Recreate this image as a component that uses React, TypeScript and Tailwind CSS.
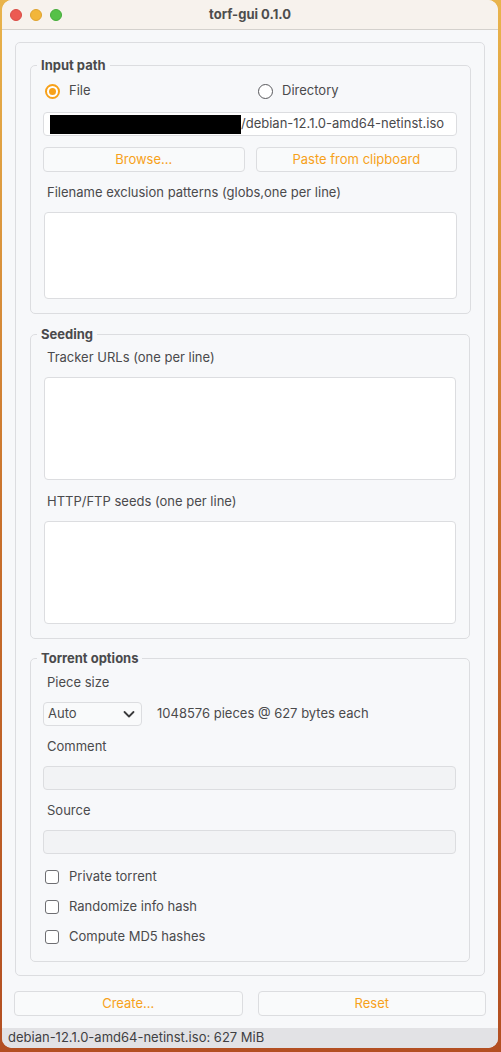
import React from "react";

const font = { fontFamily: "Inter, 'Noto Sans', sans-serif" };

function Label({ children, className = "" }: { children: React.ReactNode; className?: string }) {
  return <div className={`h-[16px] leading-[16px] pl-[4px] text-[13px] text-[#4a4a4c] ${className}`}>{children}</div>;
}

function Group({ title, children, className = "" }: { title: string; children: React.ReactNode; className?: string }) {
  return (
    <fieldset className={`border border-[#dcdde0] rounded-[5px] pl-[12px] pr-[13px] pb-[14px] ${className}`}>
      <legend className="ml-[-6px] px-[4px] h-[16px] leading-[16px] text-[13px] font-bold text-[#4a4a4c]">{title}</legend>
      {children}
    </fieldset>
  );
}

function Checkbox({ label, className = "" }: { label: string; className?: string }) {
  return (
    <div className={`h-[20px] flex items-center ${className}`}>
      <div className="ml-[2px] w-[14px] h-[14px] border-[1.5px] border-[#6e6e72] rounded-[3px] bg-white" />
      <span className="ml-[10px] text-[13px] text-[#4a4a4c]">{label}</span>
    </div>
  );
}

export default function App() {
  return (
    <div
      className="w-[501px] h-[1052px] pl-[2px] pr-[3px] pb-[4px] bg-gradient-to-b from-[#e9b44c] via-[#c8702c] to-[#b34f22]"
      style={font}
    >
      <div className="w-[496px] h-[1048px] rounded-[10px] overflow-hidden flex flex-col bg-[#f7f8fa]">
        {/* title bar */}
        <div className="h-[30px] shrink-0 bg-[#f7f2ed] border-b border-[#d4d1cd] relative flex items-center justify-center">
          <div className="absolute left-[8px] top-[9px] flex gap-[8px]">
            <div className="w-[12px] h-[12px] rounded-full bg-[#ec5a52] border border-[#d84c45]" />
            <div className="w-[12px] h-[12px] rounded-full bg-[#f2b63a] border border-[#dea22f]" />
            <div className="w-[12px] h-[12px] rounded-full bg-[#56c148] border border-[#45ab3a]" />
          </div>
          <span className="text-[13px] font-bold text-[#4d4d4d]">torf-gui 0.1.0</span>
        </div>

        {/* outer panel */}
        <div className="mx-[13px] mt-[12px] border border-[#dcdde0] rounded-[5px] px-[14px] pt-[14px] pb-[13px] flex flex-col">
          <Group title="Input path">
            <div className="mt-[8px] h-[20px] flex items-center">
              <div className="flex items-center w-[215px]">
                <div className="ml-[2px] w-[15px] h-[15px] rounded-full border-[2px] border-[#f7a11a] flex items-center justify-center bg-white">
                  <div className="w-[7px] h-[7px] rounded-full bg-[#f7a11a]" />
                </div>
                <span className="ml-[9px] text-[13px] text-[#4a4a4c]">File</span>
              </div>
              <div className="flex items-center">
                <div className="w-[15px] h-[15px] rounded-full border-[1.5px] border-[#58585c] bg-white" />
                <span className="ml-[9px] text-[13px] text-[#4a4a4c]">Directory</span>
              </div>
            </div>
            <div className="mt-[11px] h-[24px] bg-white border border-[#dcdde0] rounded-[4px] flex items-center pl-[6px] pr-[12px] overflow-hidden">
              <div className="w-[191px] h-[19px] bg-black shrink-0" />
              <span className="text-[13px] text-[#4a4a4c] whitespace-nowrap">/debian-12.1.0-amd64-netinst.iso</span>
            </div>
            <div className="mt-[11px] grid grid-cols-2 gap-[11px]">
              <button className="h-[25px] border border-[#dcdde0] rounded-[4px] bg-[#f9fafb] text-[13px] text-[#f7a11a]">Browse...</button>
              <button className="h-[25px] border border-[#dcdde0] rounded-[4px] bg-[#f9fafb] text-[13px] text-[#f7a11a]">Paste from clipboard</button>
            </div>
            <Label className="mt-[12px]">Filename exclusion patterns (globs,one per line)</Label>
            <div className="mt-[12px] ml-[1px] h-[87px] bg-white border border-[#dcdde0] rounded-[4px]" />
          </Group>

          <Group title="Seeding" className="mt-[12px]">
            <Label className="mt-[7px]">Tracker URLs (one per line)</Label>
            <div className="mt-[12px] ml-[1px] h-[103px] bg-white border border-[#dcdde0] rounded-[4px]" />
            <Label className="mt-[13px]">HTTP/FTP seeds (one per line)</Label>
            <div className="mt-[12px] ml-[1px] h-[103px] bg-white border border-[#dcdde0] rounded-[4px]" />
          </Group>

          <Group title="Torrent options" className="mt-[11px]">
            <Label className="mt-[8px]">Piece size</Label>
            <div className="mt-[12px] h-[24px] flex items-center">
              <div className="w-[99px] h-[24px] border border-[#dcdde0] rounded-[4px] bg-[#f9fafb] flex items-center justify-between pl-[4px] pr-[5px]">
                <span className="text-[13px] text-[#4a4a4c]">Auto</span>
                <svg width="14" height="14" viewBox="0 0 14 14" fill="none">
                  <path d="M2.5 5 L7 9.5 L11.5 5" stroke="#3a3a3c" strokeWidth="1.8" strokeLinecap="round" strokeLinejoin="round" />
                </svg>
              </div>
              <span className="ml-[15px] text-[13px] text-[#4a4a4c]">1048576 pieces @ 627 bytes each</span>
            </div>
            <Label className="mt-[12px]">Comment</Label>
            <div className="mt-[12px] h-[24px] bg-[#f2f3f5] border border-[#dcdde0] rounded-[4px]" />
            <Label className="mt-[12px]">Source</Label>
            <div className="mt-[12px] h-[24px] bg-[#f2f3f5] border border-[#dcdde0] rounded-[4px]" />
            <Checkbox label="Private torrent" className="mt-[13px]" />
            <Checkbox label="Randomize info hash" className="mt-[10px]" />
            <Checkbox label="Compute MD5 hashes" className="mt-[10px]" />
          </Group>
        </div>

        {/* buttons */}
        <div className="mt-[15px] px-[12px] grid grid-cols-2 gap-[15px]">
          <button className="h-[25px] border border-[#dcdde0] rounded-[4px] bg-[#f9fafb] text-[13px] text-[#f7a11a]">Create...</button>
          <button className="h-[25px] border border-[#dcdde0] rounded-[4px] bg-[#f9fafb] text-[13px] text-[#f7a11a]">Reset</button>
        </div>

        <div className="flex-1" />
        <div className="h-[20px] bg-[#e2e2e5] flex items-center pl-[6px]">
          <span className="text-[13px] text-[#3f3f42]">debian-12.1.0-amd64-netinst.iso: 627 MiB</span>
        </div>
      </div>
    </div>
  );
}
